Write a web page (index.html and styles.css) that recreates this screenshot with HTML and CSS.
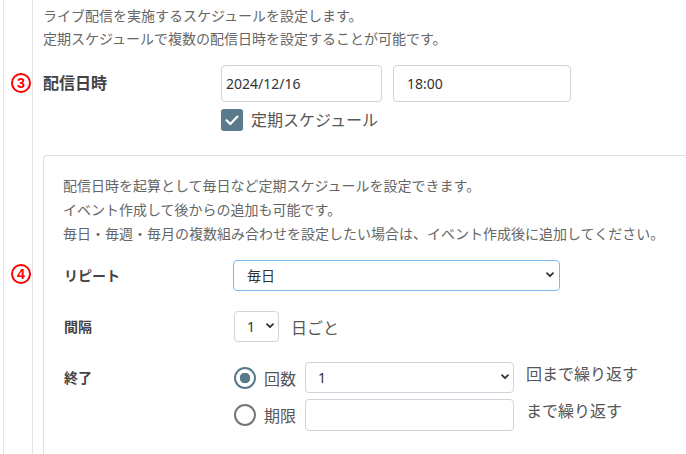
FILE: index.html
```html
<!DOCTYPE html>
<html lang="ja">
<head>
<meta charset="utf-8">
<title>配信日時</title>
<link rel="stylesheet" href="styles.css">
</head>
<body>
<div class="frame">
  <div class="main">
    <p class="intro">ライブ配信を実施するスケジュールを設定します。<br>定期スケジュールで複数の配信日時を設定することが可能です。</p>

    <div class="field">
      <span class="marker marker-3">3</span>
      <div class="field-label">配信日時</div>
      <div class="field-controls">
        <div class="datetime">
          <input class="input input-date" type="text" value="2024/12/16">
          <input class="input input-time" type="text" value="18:00">
        </div>
        <label class="check">
          <span class="check-box">
            <svg width="22" height="22" viewBox="0 0 22 22"><path d="M5.5 11.2l3.8 3.8L16.5 7.6" fill="none" stroke="#fff" stroke-width="2.2" stroke-linecap="round" stroke-linejoin="round"/></svg>
          </span>
          <span class="check-text">定期スケジュール</span>
        </label>
      </div>
    </div>

    <div class="panel">
      <p class="panel-note">配信日時を起算として毎日など定期スケジュールを設定できます。<br>イベント作成して後からの追加も可能です。<br>毎日・毎週・毎月の複数組み合わせを設定したい場合は、イベント作成後に追加してください。</p>

      <div class="prow prow-repeat">
        <span class="marker marker-4">4</span>
        <div class="plabel">リピート</div>
        <div class="select-wrap select-repeat">
          <select class="select"><option>毎日</option></select>
          <svg class="chev" width="8" height="6" viewBox="0 0 8 6"><path d="M1 1.2l3 3 3-3" fill="none" stroke="#333" stroke-width="1.8" stroke-linecap="round" stroke-linejoin="round"/></svg>
        </div>
      </div>

      <div class="prow">
        <div class="plabel">間隔</div>
        <div class="select-wrap select-interval">
          <select class="select"><option>1</option></select>
          <svg class="chev" width="8" height="6" viewBox="0 0 8 6"><path d="M1 1.2l3 3 3-3" fill="none" stroke="#333" stroke-width="1.8" stroke-linecap="round" stroke-linejoin="round"/></svg>
        </div>
        <span class="after-text">日ごと</span>
      </div>

      <div class="prow prow-end">
        <div class="plabel">終了</div>
        <div class="end-options">
          <div class="end-line">
            <input class="radio" type="radio" name="end" checked>
            <span class="radio-text">回数</span>
            <div class="select-wrap select-count">
              <select class="select"><option>1</option></select>
              <svg class="chev" width="8" height="6" viewBox="0 0 8 6"><path d="M1 1.2l3 3 3-3" fill="none" stroke="#333" stroke-width="1.8" stroke-linecap="round" stroke-linejoin="round"/></svg>
            </div>
            <span class="tail-text">回まで繰り返す</span>
          </div>
          <div class="end-line">
            <input class="radio" type="radio" name="end">
            <span class="radio-text">期限</span>
            <input class="input input-limit" type="text" value="">
            <span class="tail-text">まで繰り返す</span>
          </div>
        </div>
      </div>
    </div>
  </div>
</div>
</body>
</html>
```

FILE: styles.css
```css
* { box-sizing: border-box; }

html, body { margin: 0; padding: 0; background: #fff; }

body {
  font-family: "Noto Sans", "Noto Sans CJK JP", sans-serif;
  color: #555;
  height: 454px;
  overflow: hidden;
}

.frame {
  margin-left: 3px;
  border-left: 1px solid #e4e4e4;
  padding-left: 28px;
  height: 454px;
}

.main {
  border-left: 1px solid #e4e4e4;
  padding-left: 10px;
  padding-top: 4px;
  height: 454px;
}

.intro {
  margin: 0;
  font-size: 14px;
  line-height: 23px;
  color: #666;
}

.field {
  position: relative;
  display: flex;
  margin-top: 15px;
}

.marker {
  position: absolute;
  width: 20px;
  height: 20px;
  border: 2px solid #f00;
  border-radius: 50%;
  color: #f00;
  font-family: "Liberation Sans", sans-serif;
  font-weight: 700;
  font-size: 14.5px;
  line-height: 16px;
  text-align: center;
}

.marker-3 { left: -32px; top: 8px; }
.marker-4 { left: -52px; top: 4px; }

.field-label {
  width: 178px;
  font-size: 16px;
  font-weight: 700;
  color: #444;
  line-height: 37px;
}

.field-controls {
  display: flex;
  flex-direction: column;
  gap: 7px;
}

.datetime {
  display: flex;
  gap: 11px;
}

.input {
  font-family: inherit;
  font-size: 14px;
  color: #333;
  border: 1px solid #cfd4da;
  border-radius: 4px;
  background: #fff;
  outline: none;
}

.input-date {
  width: 161px;
  height: 37px;
  padding: 0 4px;
}

.input-time {
  width: 178px;
  height: 37px;
  padding: 0 13px;
}

.check {
  display: flex;
  align-items: center;
  gap: 8px;
  height: 22px;
}

.check-box {
  display: block;
  width: 22px;
  height: 22px;
  border-radius: 3px;
  background: #587a8a;
}

.check-box svg { display: block; }

.check-text {
  font-size: 16px;
  color: #555;
  line-height: 22px;
}

.panel {
  margin-top: 24px;
  border: 1px solid #dcdfe3;
  border-right: none;
  border-bottom: none;
  border-radius: 4px 0 0 0;
  padding: 18px 0 0 19px;
  height: 299px;
}

.panel-note {
  margin: 0;
  font-size: 14px;
  line-height: 24px;
  color: #666;
}

.prow {
  position: relative;
  display: flex;
  align-items: center;
  margin-top: 20px;
}

.prow-repeat { margin-top: 14px; }

.prow-end { align-items: flex-start; }

.plabel {
  width: 170px;
  font-size: 14px;
  font-weight: 700;
  color: #444;
  line-height: 31px;
  padding-left: 1px;
}

.select-wrap {
  position: relative;
  height: 31px;
}

.select {
  width: 100%;
  height: 100%;
  appearance: none;
  -webkit-appearance: none;
  font-family: inherit;
  font-size: 14px;
  color: #333;
  background: #fff;
  border: 1px solid #cfd4da;
  border-radius: 4px;
  padding: 0 20px 0 12px;
  outline: none;
}

.chev {
  position: absolute;
  right: 6px;
  top: 12px;
  pointer-events: none;
}

.select-repeat { width: 327px; }
.select-repeat .select { border-color: #80b9f2; padding-left: 13px; }

.select-interval { width: 45px; margin-left: 1px; }
.select-interval .chev { right: 5px; }

.after-text {
  margin-left: 12px;
  font-size: 16px;
  color: #555;
}

.end-options {
  display: flex;
  flex-direction: column;
  gap: 6px;
}

.end-line {
  display: flex;
  align-items: center;
}

.end-line + .end-line .input-limit { height: 32px; }

.radio {
  appearance: none;
  -webkit-appearance: none;
  margin: 0 0 0 1px;
  width: 22px;
  height: 22px;
  border-radius: 50%;
  border: 2px solid #767676;
  background: #fff;
}

.radio:checked {
  border: 2.5px solid #587a8a;
  background: radial-gradient(circle, #587a8a 0 5px, #fff 5.6px);
}

.radio-text {
  margin-left: 8px;
  width: 41px;
  font-size: 16px;
  color: #555;
}

.select-count { width: 209px; }
.select-count .chev { right: 5px; }

.input-limit {
  width: 209px;
  height: 31px;
  padding: 0 12px;
}

.tail-text {
  align-self: flex-start;
  margin-left: 12px;
  font-size: 16px;
  line-height: 24px;
  color: #555;
}
```
